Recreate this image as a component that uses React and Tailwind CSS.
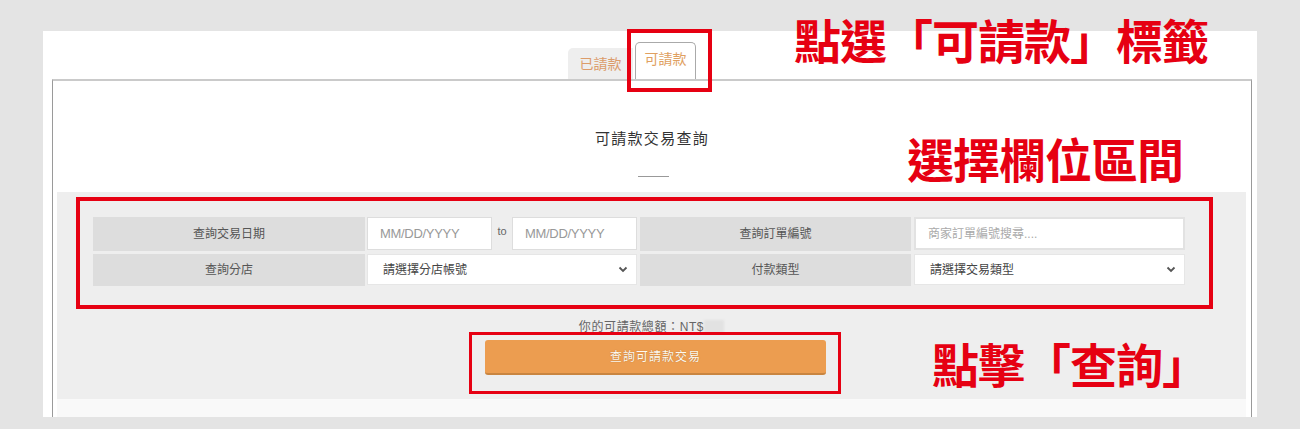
import React from "react";

// Small chevron used by the two select boxes
function Chevron() {
  return (
    <svg width="10" height="7" viewBox="0 0 10 7" className="shrink-0">
      <polyline points="1.5,1.5 5,5 8.5,1.5" fill="none" stroke="#555" strokeWidth="1.8" />
    </svg>
  );
}

function Label({ children, w, h }) {
  return (
    <div className={`${w} ${h} bg-[#dddddd] flex items-center justify-center text-[12px] text-[#555]`}>
      {children}
    </div>
  );
}

// Full-width corner bracket, Japanese glyph placement (opening at right, closing at left)
function Bracket({ children }) {
  return <span lang="ja" className="font-['Noto_Sans_CJK_JP',sans-serif]">{children}</span>;
}

export default function App() {
  return (
    <div className="relative w-[1300px] h-[429px] overflow-hidden bg-[#e4e4e4] pt-[31px] pl-[43px] font-['Liberation_Sans','Noto_Sans_CJK_TC',sans-serif]">
      {/* White page */}
      <div className="w-[1214px] h-[386px] bg-white pl-[9px] pr-[5px] flex flex-col">
        {/* Tabs */}
        <div className="h-[48px] flex items-end pl-[516px] shrink-0">
          <div className="w-[65px] h-[31px] bg-[#eeeeee] rounded-tl-[5px] flex items-center justify-center text-[14px] text-[#dc9c6a] pt-[2px]">
            已請款
          </div>
          <div className="ml-[2px] w-[61px] h-[37px] bg-white border border-b-0 border-[#aaaaaa] rounded-t-[5px] flex items-start justify-center pt-[6px] text-[14px] text-[#e0a060]">
            可請款
          </div>
        </div>

        {/* Content box */}
        <div className="flex-1 border-t-2 border-t-[#cacaca] border-x border-x-[#9a9a9a] flex flex-col">
          <div className="mt-[48px] h-[20px] flex items-center justify-center text-[15px] text-[#333] tracking-[1.3px]">
            可請款交易查詢
          </div>
          <div className="mt-[27px] mx-auto w-[31px] h-px bg-[#999] translate-x-[1px]" />

          {/* Query section */}
          <div className="mt-[15px] ml-[4px] mr-[5px] h-[207px] bg-[#eeeeee] pt-[25px] pl-[36px] flex flex-col shrink-0">
            {/* Row 1 */}
            <div className="flex h-[34px]">
              <Label w="w-[272px]" h="h-[34px]">查詢交易日期</Label>
              <div className="ml-[2px] w-[125px] h-[33px] bg-white border border-[#dddddd] flex items-center pl-[12px] text-[13px] text-[#999] tracking-[-0.3px]">
                MM/DD/YYYY
              </div>
              <div className="w-[20px] flex justify-center pt-[6px] text-[11px] text-[#666]">to</div>
              <div className="w-[125px] h-[33px] bg-white border border-[#dddddd] flex items-center pl-[12px] text-[13px] text-[#999] tracking-[-0.3px]">
                MM/DD/YYYY
              </div>
              <div className="ml-[3px]">
                <Label w="w-[271px]" h="h-[34px]">查詢訂單編號</Label>
              </div>
              <div className="ml-[3px] w-[271px] h-[33px] bg-white border-2 border-[#e2e2e2] flex items-center pl-[12px] text-[12px] text-[#aaa]">
                商家訂單編號搜尋....
              </div>
            </div>

            {/* Row 2 */}
            <div className="flex h-[32px] mt-[3px]">
              <Label w="w-[272px]" h="h-[32px]">查詢分店</Label>
              <div className="ml-[2px] w-[270px] h-[31px] bg-white border border-[#e6e6e6] flex items-center justify-between pl-[15px] pr-[8px] text-[12px] text-[#444]">
                <span>請選擇分店帳號</span>
                <Chevron />
              </div>
              <div className="ml-[3px]">
                <Label w="w-[271px]" h="h-[32px]">付款類型</Label>
              </div>
              <div className="ml-[3px] w-[271px] h-[31px] bg-white border border-[#e6e6e6] flex items-center justify-between pl-[15px] pr-[8px] text-[12px] text-[#444]">
                <span>請選擇交易類型</span>
                <Chevron />
              </div>
            </div>

            {/* Balance */}
            <div className="mt-[33px] -ml-[36px] flex justify-center items-center text-[12px] text-[#666] tracking-[0.6px] h-[16px]">
              <span>你的可請款總額：NT$</span>
              <span className="w-[20px] h-[14px] bg-[#e2e2e2] blur-[1px]" />
            </div>

            {/* Query button */}
            <button className="mt-[5px] ml-[392px] w-[341px] h-[35px] bg-[#ec9d50] border-b-2 border-[#c98540] rounded-[3px] text-[12px] text-[#fffaf0] tracking-[1px] [text-shadow:0_0_1px_rgba(120,70,20,0.6)]">
              查詢可請款交易
            </button>
          </div>

          <div className="ml-[4px] mr-[5px] flex-1 bg-[#f9f9f9]" />
        </div>
      </div>

      {/* Annotation boxes */}
      <div className="absolute left-[627px] top-[29px] w-[85px] h-[63px] border-4 border-[#e60012]" />
      <div className="absolute left-[76px] top-[197px] w-[1137px] h-[112px] border-4 border-[#e60012]" />
      <div className="absolute left-[469px] top-[332px] w-[372px] h-[62px] border-[3px] border-[#e60012]" />

      {/* Annotation captions */}
      <div className="absolute left-[794px] top-[15px] h-[47px] leading-[47px] text-[47px] font-bold tracking-[-1px] text-[#e60012] whitespace-nowrap [text-spacing-trim:space-all] font-['Noto_Sans_CJK_TC',sans-serif]">
        點選<Bracket>「</Bracket>可請款<Bracket>」</Bracket>標籤
      </div>
      <div className="absolute left-[907px] top-[134px] h-[47px] leading-[47px] text-[47px] font-bold tracking-[-1px] text-[#e60012] whitespace-nowrap [text-spacing-trim:space-all] font-['Noto_Sans_CJK_TC',sans-serif]">
        選擇欄位區間
      </div>
      <div className="absolute left-[932px] top-[339px] h-[47px] leading-[47px] text-[47px] font-bold tracking-[-1px] text-[#e60012] whitespace-nowrap [text-spacing-trim:space-all] font-['Noto_Sans_CJK_TC',sans-serif]">
        點擊<Bracket>「</Bracket>查詢<Bracket>」</Bracket>
      </div>
    </div>
  );
}
